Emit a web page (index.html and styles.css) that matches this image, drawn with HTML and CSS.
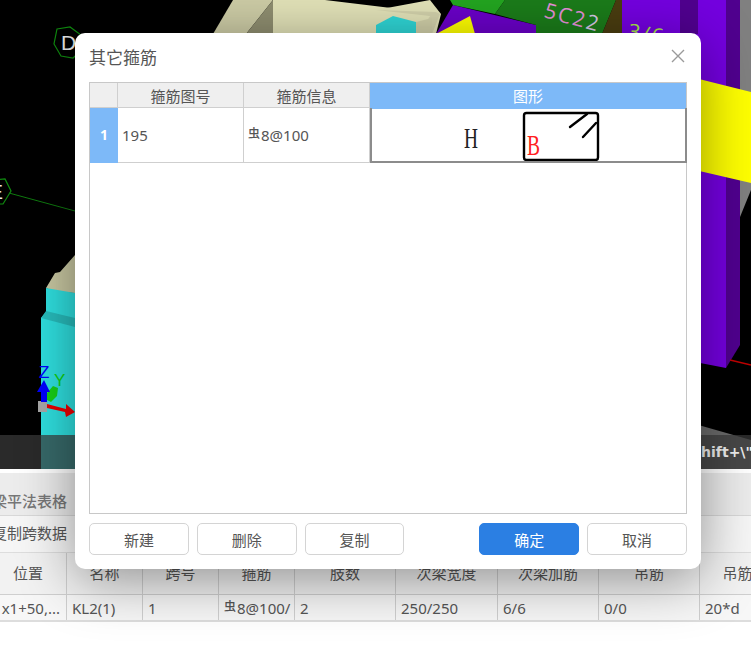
FILE: index.html
```html
<!DOCTYPE html>
<html lang="en">
<head>
  <meta charset="UTF-8">
  <meta name="viewport" content="width=device-width, initial-scale=1.0">
  <title>其它箍筋</title>
  <link rel="stylesheet" href="styles.css">
</head>
<body>
  <!-- 3D model view behind the dialog -->
  <div class="scene">
    <svg class="scene-art" width="751" height="469" viewBox="0 0 751 469">
      <rect width="751" height="469" fill="#000"/>

      <!-- top beams -->
      <polygon points="213,34 233,0 273,0 246,34" fill="#cdcca6"/>
      <polygon points="246,34 273,0 273,34" fill="#8f8e70"/>
      <polygon points="273,0 325,0 441,14 436,34 273,34" fill="#e2e2b8"/>
      <polygon points="376,10 430,0 441,14 376,24" fill="#e2e2b8"/>
      <polygon points="376,10 436,12 440,14 432,34 420,34 430,16" fill="#d2d1ab"/>
      <polygon points="376,25 393,16 416,22 416,34 376,34" fill="#2fd6d6"/>
      <polygon points="416,22 432,18 432,34 416,34" fill="#d0cfa8"/>
      <polygon points="453,5 536,25 536,34 436,34" fill="#6a00c8"/>
      <polygon points="436,34 470,16 475,34" fill="#ffff00"/>
      <polygon points="450,0 505,0 495,14 453,5" fill="#23a520"/>
      <polygon points="505,0 616,0 602,34 536,34 536,25 495,14" fill="#1b7c1a"/>
      <polygon points="602,34 616,0 622,0 622,34" fill="#4a3d10"/>
      <rect x="622" width="60" height="34" fill="#7400e0"/>
      <rect x="680" width="18" height="34" fill="#50008f"/>
      <rect x="698" width="28" height="34" fill="#7400e0"/>
      <rect x="726" width="14" height="34" fill="#50008f"/>
      <rect x="740" width="11" height="230" fill="#808080"/>
      <text class="label" x="543" y="17" fill="#e58fd8" transform="rotate(15 543 17)">5C2<tspan fill="#d8c8e8">2</tspan></text>
      <text class="label" x="627" y="38" fill="#a8e84a" transform="rotate(10 627 38)">3/6</text>

      <!-- right column -->
      <polygon points="695,34 726,34 726,368 695,362" fill="#7400e0"/>
      <polygon points="726,34 740,34 740,345 726,368" fill="#50008f"/>
      <polygon points="695,78 751,92 751,183 695,170" fill="#ffff00"/>
      <polygon points="740,217 751,190 751,425 740,425" fill="#000"/>
      <line x1="730" y1="360" x2="751" y2="365" stroke="#c00000" stroke-width="1.5"/>
      <polygon points="695,424 751,440 751,469 695,469" fill="#6a6a6a"/>

      <!-- left column -->
      <polygon points="46,288 55,273 60,272 75,255 75,293 56,292" fill="#c9c8a2"/>
      <polygon points="46,288 75,293 75,469 41,469 41,318 46,312" fill="#2fe0e0"/>
      <polygon points="41,318 46,311 75,318 75,327" fill="#27bcbc"/>

      <!-- axis markers -->
      <polygon points="57,29 70,27 81,35 84,48 73,58 61,56 54,44" fill="none" stroke="#0f8a0f" stroke-width="1.2"/>
      <text class="axis-mark" x="61" y="50" fill="#e8e8e8">D</text>
      <polygon points="-8,180 5,179 11,191 3,204 -8,204" fill="none" stroke="#0f8a0f" stroke-width="1.2"/>
      <text class="axis-mark" x="-11" y="199" fill="#e8e8e8">E</text>
      <line x1="9" y1="193" x2="75" y2="211" stroke="#0f7a0f" stroke-width="1"/>

      <!-- view gizmo -->
      <rect x="38" y="401" width="9" height="11" fill="#a8a8a8"/>
      <polygon points="47,404 66,409 66,404 75,412 66,417 65,412 47,408" fill="#f00000"/>
      <polygon points="47,400 47,393 53,386 58,388 57,396 51,402" fill="#18d018"/>
      <rect x="41" y="390" width="6" height="12" fill="#0000ff"/>
      <polygon points="37,392 44,380 50,392" fill="#0000ff"/>
      <text class="gizmo" x="39" y="378" fill="#0000ff">Z</text>
      <text class="gizmo" x="54" y="386" fill="#10d010">Y</text>
    </svg>
    <div class="status-bar"><span>Shift+\"</span></div>
  </div>

  <!-- beam table panel -->
  <div class="panel">
    <div class="panel-strip"></div>
    <div class="panel-tab"><span>梁平法表格</span></div>
    <div class="panel-tools"><span>复制跨数据</span></div>
    <div class="beam-table">
      <div class="beam-row beam-head">
        <div>位置</div><div>名称</div><div>跨号</div><div>箍筋</div><div>肢数</div><div>次梁宽度</div><div>次梁加筋</div><div>吊筋</div><div>吊筋</div>
      </div>
      <div class="beam-row beam-data">
        <div class="cell-pos">x1+50,...</div>
        <div>KL2(1)</div>
        <div>1</div>
        <div><span class="rebar">虫</span>8@100/</div>
        <div>2</div>
        <div>250/250</div>
        <div>6/6</div>
        <div>0/0</div>
        <div>20*d</div>
      </div>
    </div>
  </div>

  <!-- dialog -->
  <div class="dialog">
    <div class="dialog-title">
      <span>其它箍筋</span>
      <svg class="close-icon" width="16" height="16" viewBox="0 0 16 16">
        <path d="M2 2 L14 14 M14 2 L2 14" stroke="#9a9a9a" stroke-width="1.4" fill="none"/>
      </svg>
    </div>

    <div class="grid">
      <div class="grid-row grid-head">
        <div></div>
        <div>箍筋图号</div>
        <div>箍筋信息</div>
        <div class="head-active">图形</div>
      </div>
      <div class="grid-row grid-body">
        <div class="row-index">1</div>
        <div class="cell-text">195</div>
        <div class="cell-text"><span class="rebar">虫</span>8@100</div>
        <div class="cell-shape">
          <svg width="313" height="53" viewBox="0 0 313 53">
            <text x="92" y="40" class="shape-h" textLength="14" lengthAdjust="spacingAndGlyphs">H</text>
            <rect x="152" y="5" width="74" height="47" rx="2.5" fill="none" stroke="#000" stroke-width="2.4"/>
            <path d="M198 19 L215 6 M211 29 L224 15" stroke="#000" stroke-width="2.4" stroke-linecap="round" fill="none"/>
            <text x="155" y="47" class="shape-b" textLength="13" lengthAdjust="spacingAndGlyphs">B</text>
          </svg>
        </div>
      </div>
    </div>

    <div class="dialog-foot">
      <button class="btn">新建</button>
      <button class="btn">删除</button>
      <button class="btn">复制</button>
      <button class="btn btn-primary">确定</button>
      <button class="btn">取消</button>
    </div>
  </div>
</body>
</html>
```

FILE: styles.css
```css
* {
  box-sizing: border-box;
  margin: 0;
  padding: 0;
}

body {
  width: 751px;
  height: 646px;
  overflow: hidden;
  position: relative;
  background: #fff;
  font-family: "Noto Sans", "Noto Sans CJK SC", sans-serif;
  font-size: 15px;
  color: #555;
}

/* model view */
.scene {
  position: relative;
  height: 469px;
  overflow: hidden;
}

.scene-art {
  display: block;
}

.label {
  font-family: "Open Sans", sans-serif;
  font-size: 21px;
  letter-spacing: 2px;
}

.axis-mark {
  font-family: "Liberation Sans", sans-serif;
  font-size: 21px;
}

.gizmo {
  font-family: "Liberation Sans", sans-serif;
  font-size: 17px;
}

.status-bar {
  position: absolute;
  left: 0;
  right: 0;
  bottom: 0;
  height: 34px;
  padding-left: 691px;
  display: flex;
  align-items: center;
  background: rgba(58, 58, 58, 0.72);
  color: #eee;
  font-family: "DejaVu Sans", sans-serif;
  font-weight: bold;
  font-size: 14px;
  white-space: nowrap;
}

/* beam table */
.panel {
  background: #f4f4f4;
}

.panel-strip {
  height: 4px;
  background: #fff;
}

.panel-tab {
  height: 43px;
  padding-top: 14px;
  margin-left: -8px;
  border-bottom: 1px solid #d8d8d8;
  background: #ececec;
  font-weight: 500;
  color: #777;
  line-height: 28px;
}

.panel-tools {
  height: 36px;
  margin-left: -8px;
  line-height: 34px;
  background: #f6f6f6;
  color: #555;
}

.beam-table {
  margin-left: -10px;
  border-bottom: 2px solid #ddd;
}

.beam-row {
  display: grid;
  grid-template-columns: 77px 76px 76px 76px 101px 102px 101px 101px 76px;
}

.beam-row > div {
  border-right: 1px solid #cfcfcf;
  white-space: nowrap;
  overflow: hidden;
}

.beam-head {
  height: 43px;
  border-top: 1px solid #ddd;
  border-bottom: 1px solid #cfcfcf;
  background: #f2f2f2;
  text-align: center;
  line-height: 40px;
}

.beam-data {
  height: 25px;
  background: #f7f7f7;
  line-height: 26px;
}

.beam-data > div {
  padding-left: 5px;
}

.beam-data > .cell-pos {
  padding: 0 6px 0 0;
  text-align: right;
}

.rebar {
  font-family: "Noto Sans CJK SC", sans-serif;
  font-size: 12px;
  font-weight: 500;
  margin-right: 1px;
  position: relative;
  top: -3px;
}

/* dialog */
.dialog {
  position: absolute;
  left: 75px;
  top: 33px;
  width: 626px;
  height: 536px;
  padding: 0 14px 14px;
  display: flex;
  flex-direction: column;
  background: #fff;
  border-radius: 10px;
  box-shadow: 0 10px 56px rgba(0, 0, 0, 0.42);
}

.dialog-title {
  height: 49px;
  flex: none;
  display: flex;
  align-items: center;
  justify-content: space-between;
  padding-bottom: 3px;
  font-size: 17px;
  color: #555;
}

.close-icon {
  margin-right: 1px;
}

.grid {
  flex: 1;
  border: 1px solid #c8c8c8;
}

.grid-row {
  display: grid;
  grid-template-columns: 28px 126px 126px 1fr;
}

.grid-head {
  height: 25px;
  border-bottom: 1px solid #cfcfcf;
  background: #efefef;
  text-align: center;
  line-height: 26px;
}

.grid-head > div {
  border-right: 1px solid #cfcfcf;
}

.grid-head > .head-active {
  background: #7db9f8;
  border-right: 0;
  color: #fff;
}

.grid-body {
  height: 55px;
  border-bottom: 1px solid #cfcfcf;
}

.row-index {
  background: #7db9f8;
  color: #fff;
  font-weight: bold;
  font-size: 14px;
  text-align: center;
  line-height: 54px;
}

.cell-text {
  padding-left: 4px;
  border-right: 1px solid #cfcfcf;
  line-height: 54px;
}

.cell-shape {
  border: 2px solid #8c8c8c;
  border-top: 0;
}

.cell-shape svg {
  display: block;
}

.shape-h,
.shape-b {
  font-family: "Liberation Serif", serif;
  font-size: 30px;
}

.shape-h {
  fill: #222;
}

.shape-b {
  fill: #ff2020;
}

.dialog-foot {
  flex: none;
  display: flex;
  gap: 8px;
  padding-top: 9px;
}

.btn {
  width: 100px;
  height: 32px;
  border: 1px solid #d4d4d4;
  border-radius: 5px;
  background: #fff;
  color: #555;
  font-family: inherit;
  font-size: 15px;
}

.btn-primary {
  margin-left: 67px;
  border-color: #2b7fe3;
  background: #2b7fe3;
  color: #fff;
}
```
